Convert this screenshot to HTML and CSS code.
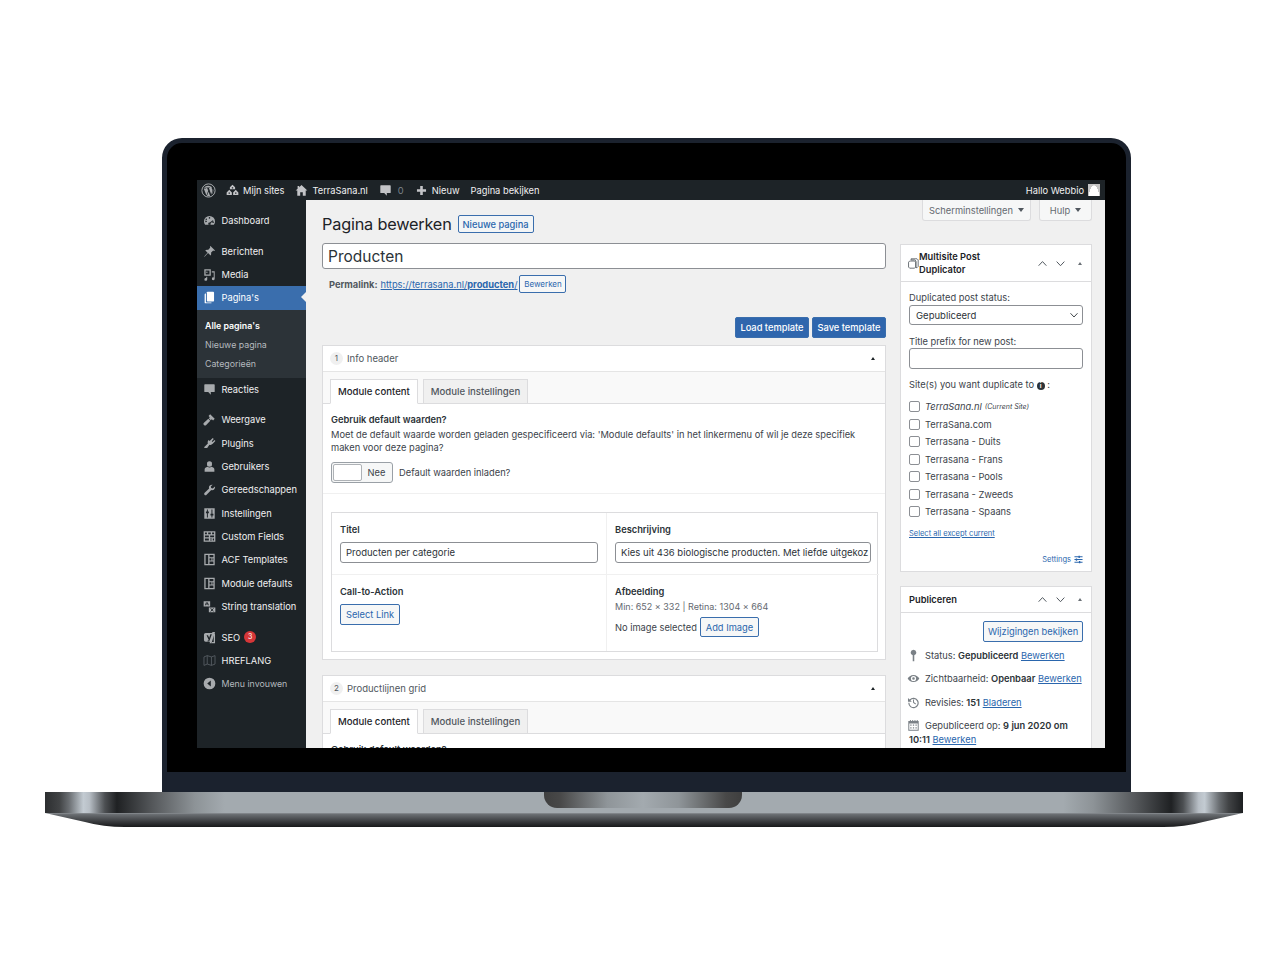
FILE: index.html
```html
<!DOCTYPE html>
<html lang="nl">

<head>
    <meta charset="UTF-8">
    <title>Pagina bewerken</title>
    <link rel="stylesheet" href="styles.css">
</head>

<body>
    <!-- icon set -->
    <svg class="defs" aria-hidden="true">
        <symbol id="i-wp" viewBox="0 0 20 20"><circle cx="10" cy="10" r="8.8" fill="none" stroke="currentColor" stroke-width="1.3"/><path d="M3.6 7.2 7.3 16.8 9.6 10.4 8.2 6.8h-1V6h4.6v.8h-1.2l3 8.6 1.5-4.6c.6-1.900-.3-3-.9-3.900-.3-.6.1-1.100.7-1.100A7.600 7.600 0 0 0 3.900 6.300h3v.900z" fill="currentColor"/><path d="M10 11.500 7.900 17.300a7.600 7.600 0 0 0 4.300 0zM16.300 7.400c.7 2.800-.1 5.500-2.100 8.200l1.800-5.300c.3-1 .4-2 .3-2.900z" fill="currentColor"/></symbol>
        <symbol id="i-sites" viewBox="0 0 20 20"><path d="M10 1 14 5v3H6V5zM5 9l4 4v4H1v-4zM15 9l4 4v4h-8v-4z" fill="currentColor"/><path d="M9 5h2v2H9zM4 13h2v2H4zM14 13h2v2h-2z" fill="#1d2327"/></symbol>
        <symbol id="i-home" viewBox="0 0 20 20"><path d="M10 1.500 19 10h-2.500v8H12v-5.500H8V18H3.500v-8H1l3-2.800V3h2.500v1.900z" fill="currentColor"/></symbol>
        <symbol id="i-comment" viewBox="0 0 20 20"><path d="M3 2h14a1 1 0 0 1 1 1v10a1 1 0 0 1-1 1h-5v4l-4-4H3a1 1 0 0 1-1-1V3a1 1 0 0 1 1-1z" fill="currentColor"/></symbol>
        <symbol id="i-plus" viewBox="0 0 20 20"><path d="M8 3h4v5h5v4h-5v5H8v-5H3V8h5z" fill="currentColor"/></symbol>
        <symbol id="i-dash" viewBox="0 0 20 20"><path d="M10 3a8.500 8.500 0 0 0-8.500 8.500c0 2 .7 3.800 1.800 5.200h13.400a8.500 8.500 0 0 0 1.800-5.200A8.500 8.500 0 0 0 10 3zm0 1.800a1.200 1.200 0 1 1 0 2.400 1.200 1.200 0 0 1 0-2.400zM5 7a1.200 1.200 0 1 1 0 2.400A1.200 1.200 0 0 1 5 7zm-1.500 4.300a1.200 1.200 0 1 1 0 .1zm12.500-.8-4.300 3.600a1.900 1.900 0 1 1-1.300-1.100l4.600-3.400zm.6 2a1.200 1.200 0 1 1 0-.1z" fill="currentColor" fill-rule="evenodd"/></symbol>
        <symbol id="i-pin" viewBox="0 0 20 20"><path d="M11.500 1.500 18.500 8.500 17 9.300 15.700 8.600 12.300 12c.5 1.500.3 3-.6 4.300L7.800 12.300 2.500 18 1.800 17.500 7 12 3.400 8c1.400-.8 2.800-1 4.300-.5l3.400-3.400-.5-1.300z" fill="currentColor"/></symbol>
        <symbol id="i-media" viewBox="0 0 20 20"><path d="M2 2h10v10H2zM4 4v6h6V4zM5 6.500a1 1 0 1 0 2 0 1 1 0 0 0-2 0zM13.500 5H18v11.500a2.200 2.200 0 1 1-1.500-2V7h-3zM5 13.500v2a2.200 2.200 0 1 0 1.500 2V14z" fill="currentColor" fill-rule="evenodd"/></symbol>
        <symbol id="i-pages" viewBox="0 0 20 20"><path d="M7 1h8.500A1.500 1.500 0 0 1 17 2.500V15a1 1 0 0 1-1 1H7a1 1 0 0 1-1-1V2a1 1 0 0 1 1-1z" fill="currentColor"/><path d="M4.500 4v12.500a1 1 0 0 0 1 1H13V19H4a1.500 1.500 0 0 1-1.500-1.500V5.500A1.500 1.500 0 0 1 4 4z" fill="currentColor"/></symbol>
        <symbol id="i-brush" viewBox="0 0 20 20"><path d="M11 2 18 9 15.500 11.500 13.500 9.500 12 11 9 8 10.500 6.500 8.500 4.500zM8.200 8.800 11.200 11.800 5 18.500a1.500 1.500 0 0 1-3.500-3.500z" fill="currentColor"/></symbol>
        <symbol id="i-plugin" viewBox="0 0 20 20"><path d="M15 1.500 16.500 3 13.500 6.500 14.500 7.500 18 4.800 19 6.300 15 10.500c-1.500 1.600-3.600 2-5.200 1.300L6.500 17H2v-1.500L7.500 10c-.7-1.700-.3-3.700 1.200-5.200l1.500 1.300z" fill="currentColor"/></symbol>
        <symbol id="i-user" viewBox="0 0 20 20"><path d="M10 2a3.800 3.800 0 0 1 3.800 4.200A3.800 3.800 0 0 1 10 10.500a3.800 3.800 0 0 1-3.800-4.300A3.800 3.800 0 0 1 10 2zM7 10.500c1.700 1.300 4.300 1.300 6 0 2.700.6 4.500 2.200 4.500 4V18h-15v-3.500c0-1.800 1.800-3.400 4.500-4z" fill="currentColor"/></symbol>
        <symbol id="i-wrench" viewBox="0 0 20 20"><path d="M18.500 5.500c.3 2-.5 3.700-1.800 4.700-1.200.8-2.700 1-4 .5L5.500 18a2 2 0 0 1-3.300-2.500l7.200-7c-.5-1.500-.2-3 .7-4.200C11.300 2.900 13 2.300 14.800 2.600L12 5.500l.6 2.200 2.300.6z" fill="currentColor"/></symbol>
        <symbol id="i-settings" viewBox="0 0 20 20"><path d="M2 2h16v16H2zM6 4v3H4.500v2.500H6V16h1.500V9.500H9V7H7.500V4zM13 4v6.500h-1.500V13H13v3h1.500v-3H16v-2.500h-1.500V4z" fill="currentColor" fill-rule="evenodd"/></symbol>
        <symbol id="i-fields" viewBox="0 0 20 20"><path d="M1 2h18v16H1zM3 4v2.500h3V4zM8 4v2.500h4V4zM14 4v2.500h3V4zM3 8.500V11h6V8.500zM11 8.500V11h6V8.500zM3 13v3h6v-3zM11 13v1.200h2.500V13zM15 13v3h2v-3zM11 15v1h2.500v-1z" fill="currentColor" fill-rule="evenodd"/></symbol>
        <symbol id="i-layout" viewBox="0 0 20 20"><path d="M2 1h16v18H2zM4 3v14h4V3zM10 3v3.500h6V3zM10 8v3.500h3V8zM14.500 8v3.500H16V8zM10 13v4h6v-4z" fill="currentColor" fill-rule="evenodd"/></symbol>
        <symbol id="i-trans" viewBox="0 0 20 20"><path d="M1 2h10v8H1zM4.500 4 3 8h1.300l.3-.9h2.800l.3.9H9L7.500 4zM5.100 6h1.800L6 4.900zM9 11.500h10V19H9z" fill="currentColor" fill-rule="evenodd"/><path d="m11.800 12.800 4.400 4.800m0-4.800-4.400 4.800" stroke="#1d2327" stroke-width="1.400"/></symbol>
        <symbol id="i-yoast" viewBox="0 0 20 20"><path d="M4 3h9.500L15 1.500h3.500L13 19h-3l1-2.500H4a2.500 2.500 0 0 1-2.500-2.500V5.500A2.500 2.500 0 0 1 4 3z" fill="currentColor"/><path d="M5.500 6.500h2.200l1.800 4 1.800-5.500h2.300l-3.500 9.500c-.4 1-1.300 1.600-3 1.800v-1.500c1 0 1.500-.4 1.700-1z" fill="#1d2327"/><path d="M14.500 3.500h2.500a2 2 0 0 1 1.500 2V19h-5.500l1-2h2.500V6c0-.6-.4-.8-1-.8h-1.600z" fill="currentColor"/></symbol>
        <symbol id="i-map" viewBox="0 0 20 20"><path d="M1.500 4.500 6.500 2.500 13 4.500 18.500 2.500V15.500L13 17.500 6.500 15.500 1.500 17.500zM6.500 2.500V15.500M13 4.500V17.500" fill="none" stroke="currentColor" stroke-width="1.200"/></symbol>
        <symbol id="i-collapse" viewBox="0 0 20 20"><path d="M10 1a9 9 0 1 1 0 18 9 9 0 0 1 0-18zm2 4.500L6.500 10l5.500 4.500z" fill="currentColor" fill-rule="evenodd"/></symbol>
        <symbol id="i-dup" viewBox="0 0 20 20"><path d="M5.500 1.500h11l2 2v12l-2 2h-2v-12l-2-2h-7zM3 5.500h9l2 2v9l-2 2H3l-2-2v-9z" fill="none" stroke="currentColor" stroke-width="1.500"/></symbol>
        <symbol id="i-status" viewBox="0 0 20 20"><path d="M10 1a4.500 4.500 0 0 1 1.200 8.800V19H8.800V9.800A4.500 4.500 0 0 1 10 1z" fill="currentColor"/></symbol>
        <symbol id="i-eye" viewBox="0 0 20 20"><path d="M10 4.500c4.300 0 7.500 3 9 5.500-1.500 2.500-4.700 5.500-9 5.500S2.500 12.500 1 10c1.500-2.500 4.700-5.500 9-5.500zM10 6a4 4 0 1 0 0 8 4 4 0 0 0 0-8zm0 2a2 2 0 1 1 0 4 2 2 0 0 1 0-4z" fill="currentColor" fill-rule="evenodd"/></symbol>
        <symbol id="i-rev" viewBox="0 0 20 20"><path d="M4 5.500A8 8 0 1 1 2 10.500h1.800A6.200 6.200 0 1 0 5.300 6.800L7.500 9H1.500V3zM9.300 5.500h1.500v4.200l3 2-.8 1.200-3.700-2.500z" fill="currentColor"/></symbol>
        <symbol id="i-cal" viewBox="0 0 20 20"><path d="M2 3h2.500V1.500H6V3h2V1.500h1.500V3h2V1.500H13V3h2V1.500h1.500V3H18v15H2zM3.500 7v9.500h13V7zM5 8.500h2v2H5zM9 8.500h2v2H9zM13 8.500h2v2h-2zM5 12.500h2v2H5zM9 12.500h2v2H9zM13 12.500h2v2h-2z" fill="currentColor" fill-rule="evenodd"/></symbol>
        <symbol id="i-sliders" viewBox="0 0 20 20"><path d="M1 3h9V1.500h3V3h6v2h-6v1.500h-3V5H1zM1 9h3V7.500h3V9h12v2H7v1.500H4V11H1zM1 15h10v-1.500h3V15h5v2h-5v1.500h-3V17H1z" fill="currentColor"/></symbol>
        <symbol id="i-up" viewBox="0 0 20 20"><path d="M3 14 10 6.500 17 14" fill="none" stroke="currentColor" stroke-width="1.800"/></symbol>
        <symbol id="i-down" viewBox="0 0 20 20"><path d="M3 6.500 10 14 17 6.500" fill="none" stroke="currentColor" stroke-width="1.800"/></symbol>
    </svg>

    <div class="laptop">
        <div class="lid">
            <div class="screen">
                <!-- admin bar -->
                <div class="adminbar">
                    <svg class="bar-logo"><use href="#i-wp"/></svg>
                    <span class="bar-item"><svg class="bar-ico"><use href="#i-sites"/></svg>Mijn sites</span>
                    <span class="bar-item"><svg class="bar-ico"><use href="#i-home"/></svg>TerraSana.nl</span>
                    <span class="bar-item bar-dim"><svg class="bar-ico"><use href="#i-comment"/></svg>0</span>
                    <span class="bar-item"><svg class="bar-ico"><use href="#i-plus"/></svg>Nieuw</span>
                    <span class="bar-item">Pagina bekijken</span>
                    <span class="bar-user">Hallo Webbio<span class="avatar"></span></span>
                </div>

                <div class="wrap">
                    <!-- linker menu -->
                    <div class="sidemenu">
                        <div class="menu-row"><svg class="menu-ico"><use href="#i-dash"/></svg>Dashboard</div>
                        <div class="menu-row sep"><svg class="menu-ico"><use href="#i-pin"/></svg>Berichten</div>
                        <div class="menu-row"><svg class="menu-ico"><use href="#i-media"/></svg>Media</div>
                        <div class="menu-row current"><svg class="menu-ico"><use href="#i-pages"/></svg>Pagina's</div>
                        <div class="submenu">
                            <div class="sub-row sub-active">Alle pagina's</div>
                            <div class="sub-row">Nieuwe pagina</div>
                            <div class="sub-row">Categorieën</div>
                        </div>
                        <div class="menu-row"><svg class="menu-ico"><use href="#i-comment"/></svg>Reacties</div>
                        <div class="menu-row sep"><svg class="menu-ico"><use href="#i-brush"/></svg>Weergave</div>
                        <div class="menu-row"><svg class="menu-ico"><use href="#i-plugin"/></svg>Plugins</div>
                        <div class="menu-row"><svg class="menu-ico"><use href="#i-user"/></svg>Gebruikers</div>
                        <div class="menu-row"><svg class="menu-ico"><use href="#i-wrench"/></svg>Gereedschappen</div>
                        <div class="menu-row"><svg class="menu-ico"><use href="#i-settings"/></svg>Instellingen</div>
                        <div class="menu-row"><svg class="menu-ico"><use href="#i-fields"/></svg>Custom Fields</div>
                        <div class="menu-row"><svg class="menu-ico"><use href="#i-layout"/></svg>ACF Templates</div>
                        <div class="menu-row"><svg class="menu-ico"><use href="#i-layout"/></svg>Module defaults</div>
                        <div class="menu-row"><svg class="menu-ico"><use href="#i-trans"/></svg>String translation</div>
                        <div class="menu-row sep"><svg class="menu-ico"><use href="#i-yoast"/></svg>SEO<span class="badge">3</span></div>
                        <div class="menu-row"><svg class="menu-ico ico-dim"><use href="#i-map"/></svg>HREFLANG</div>
                        <div class="menu-row row-dim"><svg class="menu-ico"><use href="#i-collapse"/></svg>Menu invouwen</div>
                    </div>

                    <div class="content">
                        <div class="screen-meta">
                            <span class="meta-tab meta-wide">Scherminstellingen<i class="caret"></i></span>
                            <span class="meta-tab meta-small">Hulp<i class="caret"></i></span>
                        </div>
                        <div class="heading">
                            <h1>Pagina bewerken</h1>
                            <span class="btn btn-new">Nieuwe pagina</span>
                        </div>

                        <div class="columns">
                            <div class="main">
                                <div class="title-input">Producten</div>
                                <div class="permalink">
                                    <b>Permalink:</b>
                                    <a href="#">https://terrasana.nl/<b>producten</b>/</a>
                                    <span class="btn btn-tiny">Bewerken</span>
                                </div>
                                <div class="template-btns">
                                    <span class="btn btn-primary">Load template</span>
                                    <span class="btn btn-primary">Save template</span>
                                </div>

                                <div class="postbox module">
                                    <div class="module-head"><span class="num">1</span>Info header<i class="tri"></i></div>
                                    <div class="tabs">
                                        <span class="tab tab-on">Module content</span>
                                        <span class="tab">Module instellingen</span>
                                    </div>
                                    <div class="defaults">
                                        <div class="label">Gebruik default waarden?</div>
                                        <p class="desc">Moet de default waarde worden geladen gespecificeerd via: 'Module defaults' in het linkermenu of wil je deze specifiek maken voor deze pagina?</p>
                                        <div class="toggle-row">
                                            <span class="toggle"><span class="knob"></span><span class="toggle-txt">Nee</span></span>
                                            <span>Default waarden inladen?</span>
                                        </div>
                                    </div>
                                    <div class="fields">
                                        <div class="field field-top">
                                            <div class="label">Titel</div>
                                            <div class="input">Producten per categorie</div>
                                        </div>
                                        <div class="field field-top field-right">
                                            <div class="label">Beschrijving</div>
                                            <div class="input">Kies uit 436 biologische producten. Met liefde uitgekoz</div>
                                        </div>
                                        <div class="field">
                                            <div class="label">Call-to-Action</div>
                                            <span class="btn btn-select">Select Link</span>
                                        </div>
                                        <div class="field field-right">
                                            <div class="label">Afbeelding</div>
                                            <div class="hint">Min: 652 x 332 | Retina: 1304 x 664</div>
                                            <div class="img-row">No image selected<span class="btn btn-add">Add Image</span></div>
                                        </div>
                                    </div>
                                </div>

                                <div class="postbox module module-next">
                                    <div class="module-head"><span class="num">2</span>Productlijnen grid<i class="tri"></i></div>
                                    <div class="tabs">
                                        <span class="tab tab-on">Module content</span>
                                        <span class="tab">Module instellingen</span>
                                    </div>
                                    <div class="defaults">
                                        <div class="label">Gebruik default waarden?</div>
                                    </div>
                                </div>
                            </div>

                            <div class="side">
                                <div class="postbox">
                                    <div class="box-head box-head-tall">
                                        <svg class="dup-ico"><use href="#i-dup"/></svg>
                                        <span class="box-title">Multisite Post<br>Duplicator</span>
                                        <svg class="head-ico"><use href="#i-up"/></svg>
                                        <svg class="head-ico"><use href="#i-down"/></svg>
                                        <i class="tri tri-side"></i>
                                    </div>
                                    <div class="box-body">
                                        <div class="side-label">Duplicated post status:</div>
                                        <div class="input side-select">Gepubliceerd<svg class="select-ico"><use href="#i-down"/></svg></div>
                                        <div class="side-label label-prefix">Title prefix for new post:</div>
                                        <div class="input side-input"></div>
                                        <div class="side-label label-sites">Site(s) you want duplicate to <span class="info">i</span> :</div>
                                        <div class="sites">
                                            <div class="site"><span class="check"></span><em>TerraSana.nl</em> <em class="cur">(Current Site)</em></div>
                                            <div class="site"><span class="check"></span>TerraSana.com</div>
                                            <div class="site"><span class="check"></span>Terrasana - Duits</div>
                                            <div class="site"><span class="check"></span>Terrasana - Frans</div>
                                            <div class="site"><span class="check"></span>Terrasana - Pools</div>
                                            <div class="site"><span class="check"></span>Terrasana - Zweeds</div>
                                            <div class="site"><span class="check"></span>Terrasana - Spaans</div>
                                        </div>
                                        <a href="#" class="select-all">Select all except current</a>
                                        <div class="settings-link">Settings<svg class="sliders"><use href="#i-sliders"/></svg></div>
                                    </div>
                                </div>

                                <div class="postbox box-publish">
                                    <div class="box-head">
                                        <span class="box-title">Publiceren</span>
                                        <svg class="head-ico"><use href="#i-up"/></svg>
                                        <svg class="head-ico"><use href="#i-down"/></svg>
                                        <i class="tri tri-side"></i>
                                    </div>
                                    <div class="box-body pub-body">
                                        <div class="pub-btn-row"><span class="btn btn-preview">Wijzigingen bekijken</span></div>
                                        <div class="pub-row"><svg class="pub-ico"><use href="#i-status"/></svg>Status: <b>Gepubliceerd</b> <a href="#">Bewerken</a></div>
                                        <div class="pub-row"><svg class="pub-ico"><use href="#i-eye"/></svg>Zichtbaarheid: <b>Openbaar</b> <a href="#">Bewerken</a></div>
                                        <div class="pub-row"><svg class="pub-ico"><use href="#i-rev"/></svg>Revisies: <b>151</b> <a href="#">Bladeren</a></div>
                                        <div class="pub-row pub-date"><svg class="pub-ico"><use href="#i-cal"/></svg>Gepubliceerd op: <b>9 jun 2020 om 10:11</b> <a href="#">Bewerken</a></div>
                                    </div>
                                </div>
                            </div>
                        </div>
                    </div>
                </div>
            </div>
        </div>
        <div class="base"><div class="notch"></div></div>
        <div class="base-lip"></div>
    </div>
</body>

</html>
```

FILE: styles.css
```css
/* page */
body {
    margin: 0;
    background: #fff;
    font-family: "Inter", "Liberation Sans", sans-serif;
    font-size: 9.3px;
    line-height: 13px;
    color: #3c434a;
}

.defs {
    display: none;
}

a {
    color: #2a66ad;
    text-decoration: underline;
}

/* laptop frame */
.laptop {
    width: 1198px;
    margin-left: 45px;
    padding-top: 138px;
}

.lid {
    box-sizing: border-box;
    width: 969px;
    height: 654px;
    margin-left: 117px;
    padding: 37px 26px 48px 30px;
    background: #000;
    border: 5px solid #1b222e;
    border-bottom-width: 20px;
    border-radius: 20px 20px 0 0;
}

.screen {
    width: 908px;
    height: 568px;
    overflow: hidden;
    background: #f0f0f0;
}

.base {
    display: flex;
    justify-content: center;
    height: 21px;
    padding-right: 0;
    background: linear-gradient(90deg, #2c2e30 0, #414345 1.2%, #6a6e72 2%, #c3cbd2 3.2%, #b8bfc6 3.7%, #4c4f52 5%, #1f2123 6%, #55585b 9%, #8d9397 12.5%, #a3aaaf 15%, #a3aaaf 85%, #8d9397 87.5%, #55585b 91%, #1f2123 94%, #4c4f52 95%, #b8bfc6 96.3%, #c3cbd2 96.8%, #6a6e72 98%, #414345 98.8%, #1d1f21 100%);
}

.notch {
    width: 198px;
    height: 16px;
    margin-right: 2px;
    border-radius: 0 0 13px 13px;
    background: linear-gradient(90deg, #3f3f3f 0, #484848 8%, #8f9599 32%, #a3aaaf 50%, #8f9599 68%, #484848 92%, #3f3f3f 100%);
}

.base-lip {
    height: 14px;
    background: linear-gradient(180deg, #8c9196 0, #6a6e72 10%, #3a3c3f 60%, #17181a 100%);
    clip-path: path("M0 0H1198L1158 9Q1140 14 1118 14H80Q58 14 40 9Z");
}

/* admin bar */
.adminbar {
    display: flex;
    align-items: center;
    height: 20px;
    padding: 0 5px 0 4px;
    background: #1d2327;
    color: #f0f0f1;
}

.bar-logo {
    width: 15px;
    height: 15px;
    margin-right: 10px;
    color: #a7aaad;
}

.bar-item {
    display: flex;
    align-items: center;
    margin-right: 11px;
}

.bar-ico {
    width: 13px;
    height: 13px;
    margin-right: 4px;
    color: #c3c4c7;
}

.bar-dim {
    color: #7c8288;
}

.bar-dim .bar-ico {
    margin-right: 6px;
}

.bar-user {
    display: flex;
    align-items: center;
    margin-left: auto;
}

.avatar {
    width: 12px;
    height: 12px;
    margin-left: 4px;
    background: radial-gradient(circle at 50% 38%, #fff 0 3px, transparent 3.2px), radial-gradient(ellipse at 50% 110%, #fff 0 5px, transparent 5.2px), #c4c4c4;
}

.wrap {
    display: flex;
    height: 548px;
}

/* side menu */
.sidemenu {
    flex: none;
    box-sizing: border-box;
    width: 109px;
    padding-top: 9px;
    background: #1d2327;
    color: #f0f0f1;
}

.menu-row {
    position: relative;
    display: flex;
    align-items: center;
    height: 23.4px;
    padding-left: 6px;
    white-space: nowrap;
}

.menu-ico {
    flex: none;
    width: 13px;
    height: 13px;
    margin-right: 5.500px;
    color: #a7aaad;
}

.sep {
    margin-top: 7px;
}

.current {
    background: #3a6ead;
    color: #fff;
}

.current .menu-ico {
    color: #fff;
}

/* pointer of the current item */
.current::after {
    content: "";
    position: absolute;
    right: 0;
    top: 6px;
    border: 5.500px solid transparent;
    border-left: 0;
    border-right-color: #f0f0f0;
}

.submenu {
    height: 68px;
    box-sizing: border-box;
    padding: 6px 0 0 8px;
    background: #2c3338;
    color: #b4b9be;
}

.sub-row {
    height: 19px;
    line-height: 19px;
    font-size: 8.800px;
}

.sub-active {
    color: #fff;
    font-weight: 600;
}

.row-dim {
    color: #b4b9be;
    font-size: 8.800px;
}

.ico-dim {
    color: #5e656b;
}

.badge {
    width: 12px;
    height: 12px;
    margin-left: 4px;
    border-radius: 50%;
    background: #d63638;
    color: #fff;
    font-size: 7px;
    line-height: 12px;
    text-align: center;
}

/* content */
.content {
    flex: 1;
    padding-left: 16px;
}

.screen-meta {
    display: flex;
    justify-content: flex-end;
    gap: 8px;
    height: 21px;
    margin: 0 13px -6px 0;
}

.meta-tab {
    box-sizing: border-box;
    display: flex;
    align-items: center;
    justify-content: center;
    height: 21px;
    border: 1px solid #dcdcde;
    border-top: 0;
    border-radius: 0 0 3px 3px;
    background: #f6f7f7;
    color: #646970;
}

.meta-wide {
    width: 109px;
}

.meta-small {
    width: 53px;
}

.caret {
    margin-left: 5px;
    border: 3px solid transparent;
    border-top: 4px solid #50575e;
    border-bottom: 0;
}

.heading {
    display: flex;
    align-items: center;
    height: 18px;
    margin-bottom: 10px;
}

h1 {
    margin: 0 6px 0 0;
    font-size: 16.300px;
    font-weight: 400;
    letter-spacing: -0.2px;
    color: #1d2327;
}

.btn {
    box-sizing: border-box;
    display: inline-flex;
    align-items: center;
    justify-content: center;
    border: 1px solid #3a6ead;
    border-radius: 2px;
    background: #f6f7f7;
    color: #2a66ad;
    white-space: nowrap;
}

.btn-new {
    width: 76px;
    height: 18px;
    font-weight: 500;
    background: #f3f5f6;
}

.columns {
    display: flex;
    gap: 14px;
}

.main {
    width: 564px;
    flex: none;
}

.side {
    width: 192px;
    flex: none;
    margin-top: 1px;
}

.title-input {
    box-sizing: border-box;
    height: 26px;
    padding-left: 5px;
    border: 1px solid #8c8f94;
    border-radius: 3px;
    background: #fff;
    font-size: 15.500px;
    line-height: 25px;
    color: #2c3338;
}

.permalink {
    display: flex;
    align-items: center;
    gap: 3px;
    height: 18px;
    margin-top: 6px;
    padding-left: 7px;
    color: #50575e;
}

.permalink a {
    margin-right: -1px;
}

.btn-tiny {
    width: 47px;
    height: 18px;
    font-size: 8px;
}

.template-btns {
    display: flex;
    justify-content: flex-end;
    gap: 3px;
    margin-top: 24px;
}

.btn-primary {
    width: 74px;
    height: 21px;
    background: #2f66ad;
    color: #fff;
    font-weight: 500;
}

.postbox {
    border: 1px solid #dcdcde;
    background: #fff;
}

.module {
    margin-top: 7px;
    box-sizing: border-box;
    height: 315px;
}

.module-next {
    margin-top: 15px;
    height: auto;
}

.module-head {
    position: relative;
    display: flex;
    align-items: center;
    height: 25px;
    padding-left: 7px;
    font-size: 9.500px;
    color: #50575e;
}

.num {
    width: 13px;
    height: 13px;
    margin-right: 4px;
    border-radius: 50%;
    background: #f0f0f0;
    font-size: 8px;
    line-height: 13px;
    text-align: center;
}

.tri {
    position: absolute;
    right: 10px;
    top: 11px;
    border: 2.500px solid transparent;
    border-top: 0;
    border-bottom: 3px solid #1d2327;
}

.tabs {
    display: flex;
    align-items: flex-end;
    gap: 5px;
    box-sizing: border-box;
    height: 33px;
    padding-left: 7px;
    border-top: 1px solid #e5e5e5;
    border-bottom: 1px solid #dcdcde;
    background: #f9f9f9;
}

.tab {
    box-sizing: border-box;
    height: 25px;
    margin-bottom: -1px;
    padding: 0 7px;
    border: 1px solid #dcdcde;
    background: #f0f0f0;
    color: #50575e;
    font-size: 9.600px;
    font-weight: 500;
    line-height: 23px;
}

.tab-on {
    border-bottom-color: #fff;
    background: #fff;
    color: #1d2327;
}

.defaults {
    height: 90px;
    box-sizing: border-box;
    padding: 9px 8px 0;
    border-bottom: 1px solid #f0f0f0;
}

.label {
    font-weight: 600;
    color: #2c3338;
}

.desc {
    margin: 2px 0 0;
}

.toggle-row {
    display: flex;
    align-items: center;
    gap: 6px;
    margin-top: 8px;
}

.toggle {
    box-sizing: border-box;
    display: flex;
    align-items: center;
    width: 62px;
    height: 21px;
    padding: 1px;
    border: 1px solid #9aa0a6;
    border-radius: 3px;
    background: #f6f7f7;
}

.knob {
    box-sizing: border-box;
    width: 29px;
    height: 17px;
    border: 1px solid #aeb2b6;
    border-radius: 2px;
    background: #fff;
}

.toggle-txt {
    flex: 1;
    text-align: center;
}

/* acf style field table */
.fields {
    display: grid;
    grid-template-columns: 274px 273px;
    grid-template-rows: 62px 76px;
    width: 547px;
    box-sizing: border-box;
    margin: 18px 0 0 8px;
    border: 1px solid #dcdcde;
    border-top-width: 1px;
}

.field {
    box-sizing: border-box;
    padding: 10px 8px 0;
}

.field-top {
    border-bottom: 1px solid #f0f0f0;
}

.field-right {
    border-left: 1px solid #f0f0f0;
}

.input {
    box-sizing: border-box;
    height: 21px;
    margin-top: 6px;
    padding-left: 5px;
    border: 1px solid #8c8f94;
    border-radius: 3px;
    background: #fff;
    color: #2c3338;
    font-size: 9.500px;
    line-height: 19px;
    white-space: nowrap;
    overflow: hidden;
}

.btn-select {
    width: 60px;
    height: 21px;
    margin-top: 6px;
}

.hint {
    margin-top: 2px;
    color: #646970;
    font-size: 9px;
}

.img-row {
    display: flex;
    align-items: center;
    gap: 3px;
    margin-top: 4px;
}

.btn-add {
    width: 59px;
    height: 20px;
}

/* right column boxes */
.box-head {
    display: flex;
    align-items: center;
    position: relative;
    height: 25px;
    padding-left: 8px;
    border-bottom: 1px solid #dcdcde;
}

.box-head-tall {
    height: 36px;
}

.box-title {
    flex: 1;
    color: #1d2327;
    font-weight: 600;
}

.dup-ico {
    width: 11px;
    height: 11px;
    margin-left: -1px;
    margin-top: 1px;
    color: #50575e;
}

.head-ico {
    width: 11px;
    height: 11px;
    margin-right: 7px;
    color: #50575e;
}

.tri-side {
    position: static;
    margin: 0 9px 0 5px;
    border-bottom-color: #6a7076;
}

.box-body {
    padding: 0 8px;
}

.side-label {
    margin-top: 9px;
}

.side-select {
    position: relative;
    height: 20px;
    margin-top: 1px;
    padding-left: 6px;
}

.select-ico {
    position: absolute;
    right: 3px;
    top: 4px;
    width: 10px;
    height: 10px;
    color: #2c3338;
}

.label-prefix {
    margin-top: 10px;
}

.side-input {
    height: 21px;
    margin-top: 0;
}

.label-sites {
    margin-top: 9px;
}

.info {
    display: inline-block;
    width: 8px;
    height: 8px;
    border-radius: 50%;
    background: #2c3338;
    color: #fff;
    font-size: 6.500px;
    font-weight: 700;
    line-height: 8px;
    text-align: center;
}

.sites {
    margin-top: 7px;
}

.site {
    display: flex;
    align-items: center;
    height: 17.500px;
    white-space: pre;
}

.check {
    box-sizing: border-box;
    flex: none;
    width: 11px;
    height: 11px;
    margin-right: 5px;
    border: 1px solid #8c8f94;
    border-radius: 2px;
    background: #fff;
}

.cur {
    font-size: 7px;
    margin-left: 3px;
}

.select-all {
    display: block;
    margin-top: 6px;
    font-size: 7.500px;
}

.settings-link {
    display: flex;
    justify-content: flex-end;
    align-items: center;
    gap: 3px;
    margin-top: 9px;
    height: 22px;
    color: #2a66ad;
    font-size: 7.500px;
}

.sliders {
    width: 9px;
    height: 9px;
    color: #2a66ad;
}

.box-publish {
    margin-top: 14px;
}

.pub-body {
    padding-top: 8px;
    padding-bottom: 8px;
}

.pub-btn-row {
    display: flex;
    justify-content: flex-end;
}

.btn-preview {
    width: 100px;
    height: 21px;
    background: #f6f7f7;
}

.pub-row {
    position: relative;
    min-height: 13px;
    margin-top: 10.400px;
    padding-left: 16px;
    white-space: nowrap;
}

.pub-row:nth-child(2) {
    margin-top: 7.500px;
}

.pub-row b {
    color: #2c3338;
    font-weight: 600;
}

.pub-date {
    padding-left: 0;
    text-indent: 16px;
    white-space: normal;
    line-height: 14px;
}

.pub-ico {
    position: absolute;
    left: -2px;
    top: 0;
    width: 13px;
    height: 13px;
    color: #7a8086;
}
```
